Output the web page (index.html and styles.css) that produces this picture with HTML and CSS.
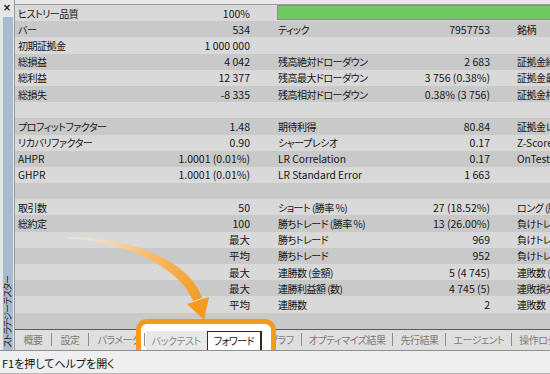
FILE: index.html
```html
<!DOCTYPE html>
<html lang="ja">
<head>
<meta charset="utf-8">
<title>ストラテジーテスター</title>
<link rel="stylesheet" href="styles.css">
</head>
<body>
<div class="app">
  <aside class="side">
    <div class="close">×</div>
    <div class="side-bar"><span class="side-title">ストラテジーテスター</span></div>
  </aside>
  <div class="main">
    <div class="table">
      <div class="row"><span>ヒストリー品質</span><span class="v">100%</span><span class="bar"></span></div>
      <div class="row"><span>バー</span><span class="v">534</span><span class="l2">ティック</span><span class="v">7957753</span><span class="l3">銘柄</span></div>
      <div class="row"><span>初期証拠金</span><span class="v">1 000 000</span></div>
      <div class="row"><span>総損益</span><span class="v">4 042</span><span class="l2">残高絶対ドローダウン</span><span class="v">2 683</span><span class="l3">証拠金絶対ドローダウン</span></div>
      <div class="row"><span>総利益</span><span class="v">12 377</span><span class="l2">残高最大ドローダウン</span><span class="v">3 756 (0.38%)</span><span class="l3">証拠金最大ドローダウン</span></div>
      <div class="row"><span>総損失</span><span class="v">-8 335</span><span class="l2">残高相対ドローダウン</span><span class="v">0.38% (3 756)</span><span class="l3">証拠金相対ドローダウン</span></div>
      <div class="row"></div>
      <div class="row"><span>プロフィットファクター</span><span class="v">1.48</span><span class="l2">期待利得</span><span class="v">80.84</span><span class="l3">証拠金レベル</span></div>
      <div class="row"><span>リカバリファクター</span><span class="v">0.90</span><span class="l2">シャープレシオ</span><span class="v">0.17</span><span class="l3 lat">Z-Score</span></div>
      <div class="row"><span class="lat">AHPR</span><span class="v">1.0001 (0.01%)</span><span class="l2 lat">LR Correlation</span><span class="v">0.17</span><span class="l3 lat">OnTester 結果</span></div>
      <div class="row"><span class="lat">GHPR</span><span class="v">1.0001 (0.01%)</span><span class="l2 lat">LR Standard Error</span><span class="v">1 663</span></div>
      <div class="row"></div>
      <div class="row"><span>取引数</span><span class="v">50</span><span class="l2">ショート (勝率 %)</span><span class="v">27 (18.52%)</span><span class="l3">ロング (勝率 %)</span></div>
      <div class="row"><span>総約定</span><span class="v">100</span><span class="l2">勝ちトレード (勝率 %)</span><span class="v">13 (26.00%)</span><span class="l3">負けトレード (負率 %)</span></div>
      <div class="row"><span></span><span class="v">最大</span><span class="l2">勝ちトレード</span><span class="v">969</span><span class="l3">負けトレード</span></div>
      <div class="row"><span></span><span class="v">平均</span><span class="l2">勝ちトレード</span><span class="v">952</span><span class="l3">負けトレード</span></div>
      <div class="row"><span></span><span class="v">最大</span><span class="l2">連勝数 (金額)</span><span class="v">5 (4 745)</span><span class="l3">連敗数 (金額)</span></div>
      <div class="row"><span></span><span class="v">最大</span><span class="l2">連勝利益額 (数)</span><span class="v">4 745 (5)</span><span class="l3">連敗損失額 (数)</span></div>
      <div class="row"><span></span><span class="v">平均</span><span class="l2">連勝数</span><span class="v">2</span><span class="l3">連敗数</span></div>
      <div class="row"></div>
    </div>
    <nav class="tabs">
      <span class="tab">概要</span><i class="sep"></i>
      <span class="tab">設定</span><i class="sep"></i>
      <span class="tab">パラメータ</span>
      <span class="hl">
        <i class="sep"></i>
        <span class="tab back">バックテスト</span>
        <span class="tab fwd">フォワード</span>
      </span>
      <span class="tab">グラフ</span><i class="sep"></i>
      <span class="tab">オプティマイズ結果</span><i class="sep"></i>
      <span class="tab">先行結果</span><i class="sep"></i>
      <span class="tab">エージェント</span><i class="sep"></i>
      <span class="tab">操作ログ</span>
    </nav>
  </div>
</div>
<footer class="status">F1を押してヘルプを開く</footer>
<svg class="arrow" width="550" height="374" viewBox="0 0 550 374">
  <defs>
    <linearGradient id="ag" x1="68" y1="237" x2="200" y2="305" gradientUnits="userSpaceOnUse">
      <stop offset="0" stop-color="#fdf1e0" stop-opacity="0.4"/>
      <stop offset="0.45" stop-color="#f8c57e"/>
      <stop offset="1" stop-color="#f39a1f"/>
    </linearGradient>
  </defs>
  <path d="M68 237 C132 237 190 261 202 298 L193 301 C180 268 128 242 68 238.5 Z" fill="url(#ag)"/>
  <path d="M187 304 L209 297 L204 320 Z" fill="#f39a1f"/>
</svg>
</body>
</html>
```

FILE: styles.css
```css
html, body {
  margin: 0;
  padding: 0;
}
body {
  width: 550px;
  height: 374px;
  overflow: hidden;
  position: relative;
  background: #f0f0f0;
  font-family: "Noto Sans CJK JP", "Noto Sans", sans-serif;
  font-size: 10px;
  color: #151515;
  font-feature-settings: "palt";
}
.app {
  display: flex;
  height: 350px;
}
.side {
  width: 15px;
  flex: none;
  display: flex;
  flex-direction: column;
  background: #e6e6e6;
  border-right: 1px solid #9a9a9a;
  box-sizing: border-box;
}
.close {
  height: 17px;
  font-size: 10px;
  font-weight: bold;
  line-height: 16px;
  text-align: center;
  font-family: "DejaVu Sans", sans-serif;
}
.side-bar {
  flex: 1;
  margin: 0 1px 0 3px;
  background: #a7bcd3;
  display: flex;
  align-items: flex-end;
  justify-content: center;
}
.side-title {
  writing-mode: vertical-rl;
  text-orientation: sideways;
  transform: rotate(180deg);
  font-size: 9px;
  letter-spacing: -1px;
  line-height: 10px;
  padding-top: 2px;
  color: #1a1a1a;
}
.main {
  flex: 1;
  min-width: 0;
  display: flex;
  flex-direction: column;
  overflow: hidden;
  padding-top: 4px;
  background: #e8e8e8;
}
.table {
  border-top: 1px solid #9c9c9c;
}
.row {
  display: grid;
  grid-template-columns: 118px 114px 138px 102px 1fr;
  align-items: center;
  height: 16.2px;
  padding-left: 3px;
  white-space: nowrap;
  overflow: hidden;
  background: #d9d9d9;
  letter-spacing: -0.5px;
}
.row:nth-child(even) {
  background: #c9c9c9;
}
.row .lat {
  letter-spacing: 0;
  font-size: 10.2px;
}
.v {
  text-align: right;
  font-size: 10.5px;
  letter-spacing: 0;
}
.l2 {
  padding-left: 28px;
}
.l3 {
  padding-left: 27px;
}
.bar {
  grid-column: 3 / 6;
  margin-left: 27px;
  height: 13px;
  background: #6fc862;
  border: 1px solid #8d8d8d;
  border-right: none;
  align-self: start;
}
.tabs {
  flex: 1;
  display: flex;
  align-items: center;
  padding-left: 0;
  border-top: 1px solid #5c5c5c;
  background: #dfdfdf;
  color: #7b7b7b;
  white-space: nowrap;
  letter-spacing: -0.5px;
}
.tab {
  padding: 0 8.5px;
  line-height: 19px;
}
.hl ~ .tab {
  padding: 0 7px;
}
.sep {
  display: block;
  width: 1px;
  height: 13px;
  background: #8c8c8c;
  flex: none;
}
.hl {
  position: relative;
  z-index: 1;
  display: flex;
  align-items: flex-end;
  align-self: stretch;
  margin-left: -5px;
}
.hl::before {
  content: "";
  position: absolute;
  top: -11px;
  bottom: -10px;
  left: -8px;
  right: -14px;
  background: #fff;
  border: 5px solid #f39a1f;
  border-radius: 11px;
  z-index: -1;
}
.hl .sep {
  align-self: center;
}
.hl .tab {
  padding: 0 6px;
}
.back {
  margin-left: 1px;
  background: #e8e8e8;
  color: #8a8a8a;
}
.fwd {
  background: #fff;
  color: #111;
  border: 1px solid #2a2a2a;
  border-right-width: 2px;
  border-bottom: none;
  line-height: 18px;
}
.status {
  height: 24px;
  box-sizing: border-box;
  border-top: 1px solid #8f8f8f;
  border-bottom: 1px solid #b8b8b8;
  background: #efefef;
  padding: 3px 0 0 2px;
  font-size: 11px;
  line-height: 18px;
  color: #111;
}
.arrow {
  position: absolute;
  left: 0;
  top: 0;
  pointer-events: none;
}
```
